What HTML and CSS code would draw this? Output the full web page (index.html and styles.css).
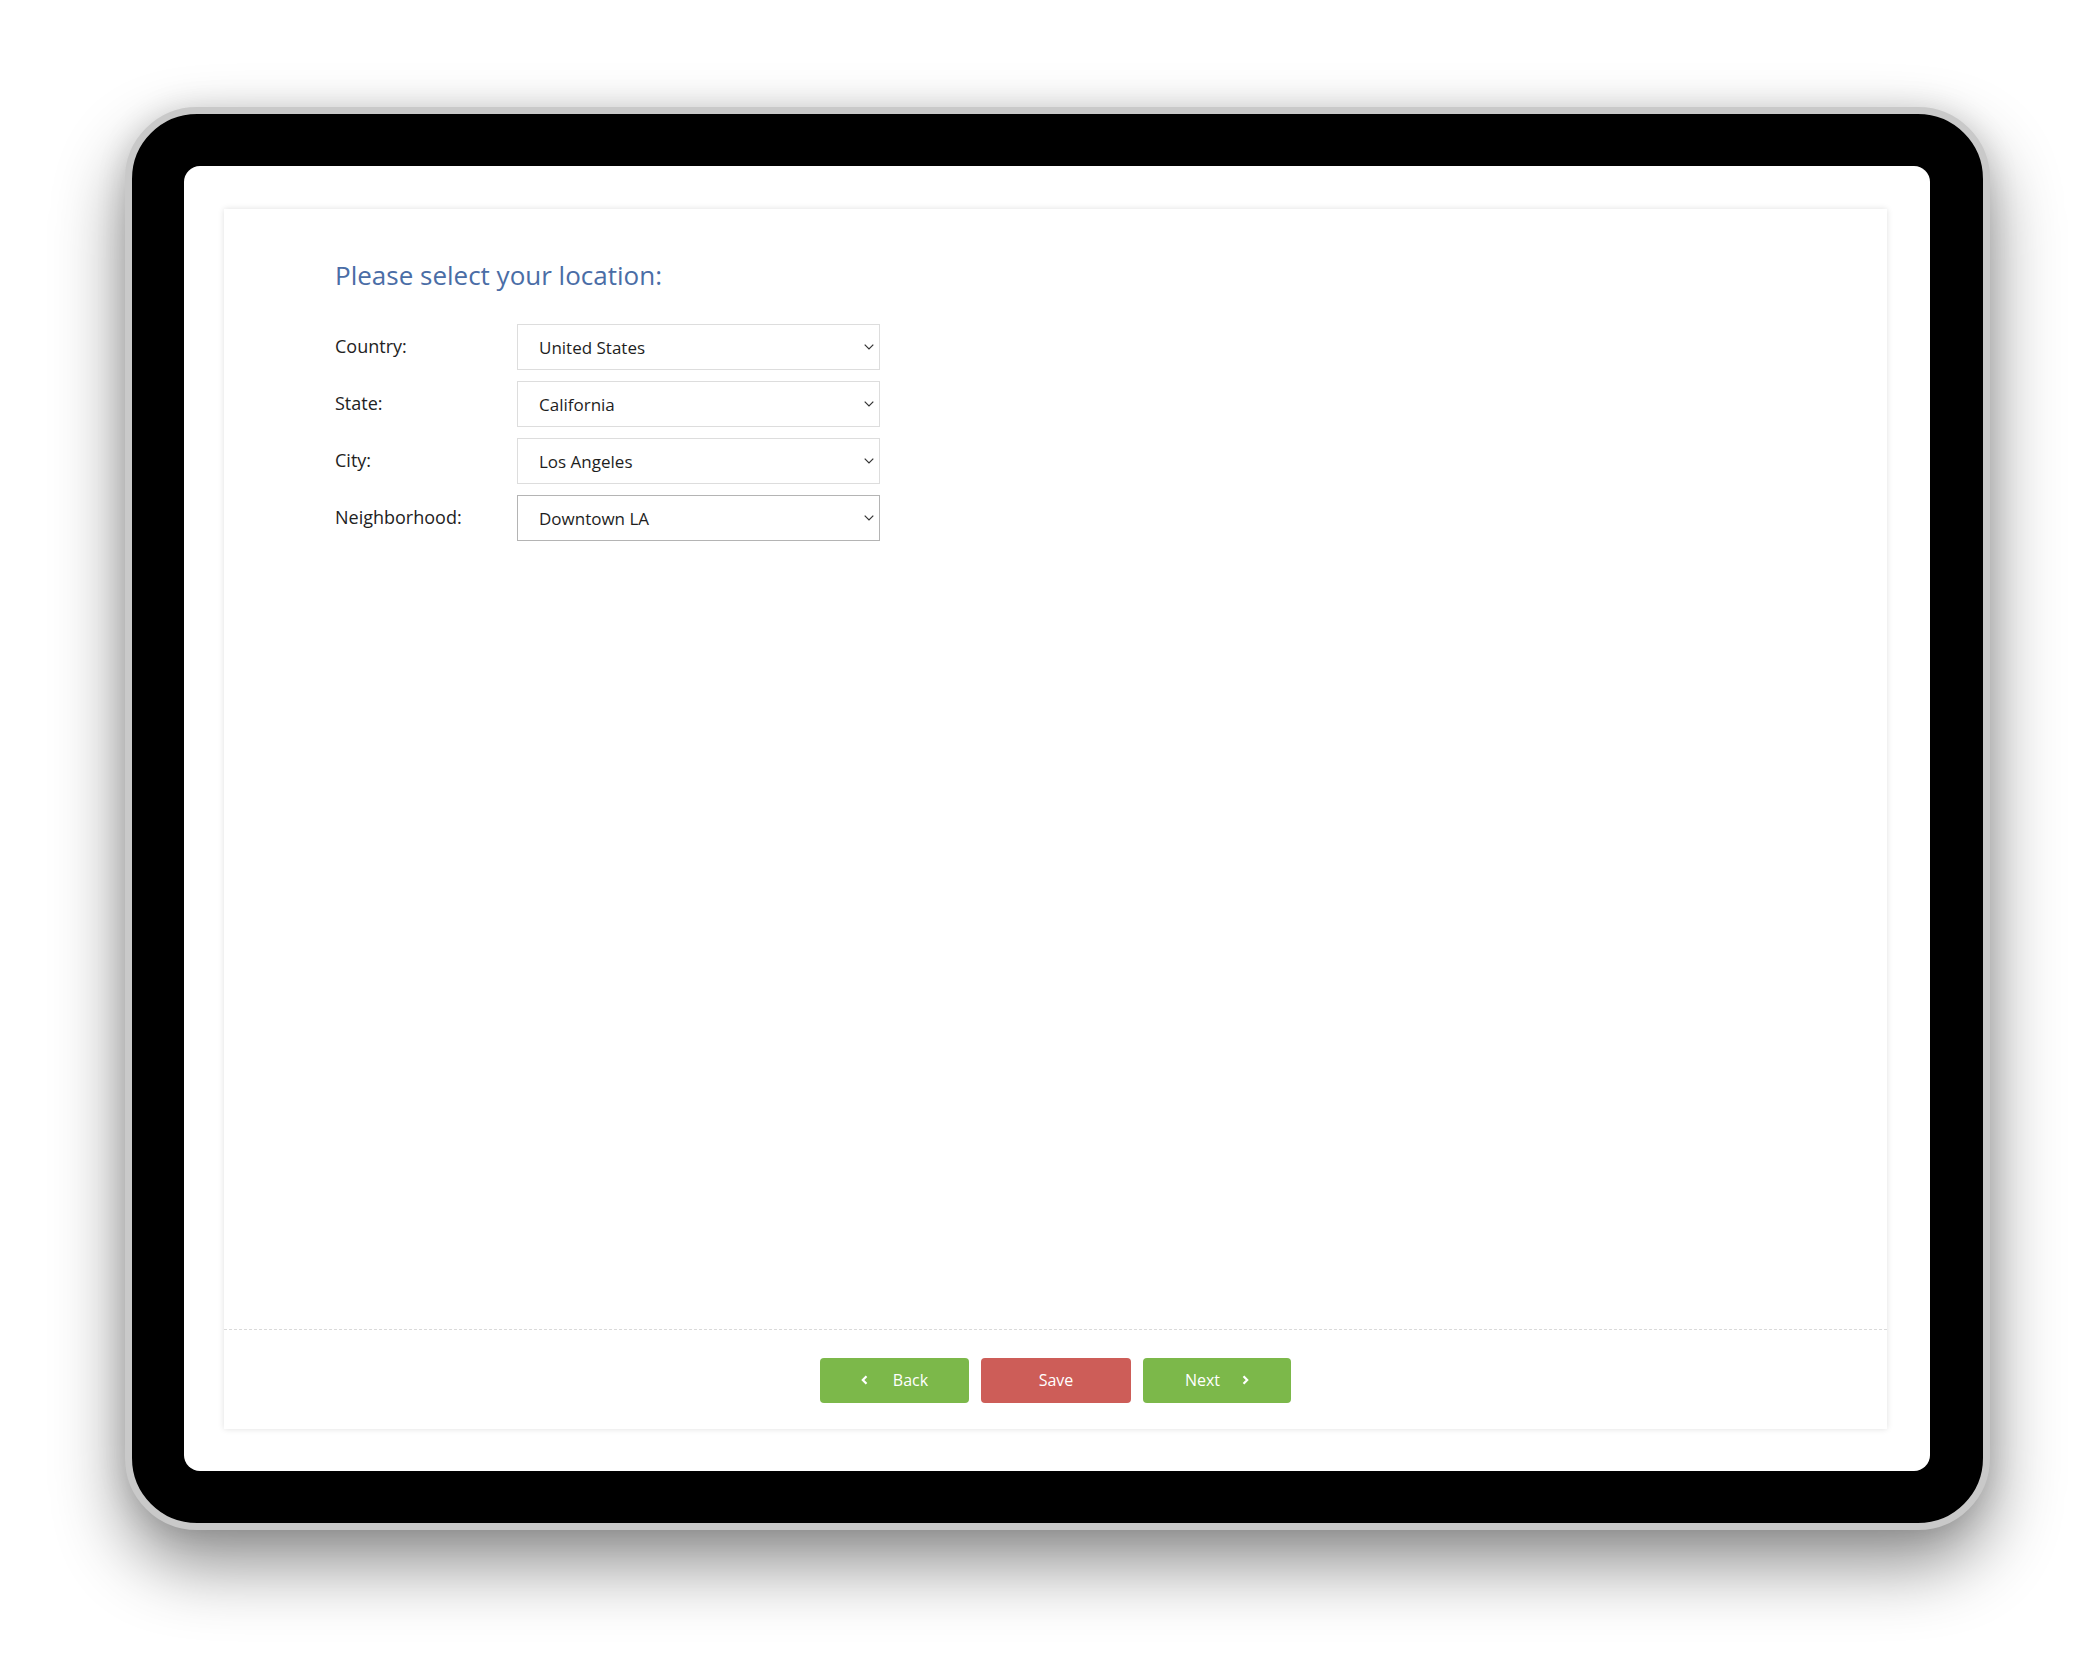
FILE: index.html
```html
<!DOCTYPE html>
<html lang="en">
<head>
<meta charset="utf-8">
<title>Select location</title>
<link rel="stylesheet" href="styles.css">
</head>
<body>
<div class="stage">
  <div class="device">
    <div class="screen">
      <div class="card">
        <div class="card-body">
          <h1 class="title">Please select your location:</h1>
          <div class="form">
            <div class="row">
              <label class="label" for="country">Country:</label>
              <div class="select-wrap">
                <select id="country" class="select"><option>United States</option></select>
                <svg class="chev" width="10" height="6" viewBox="0 0 10 6"><polyline points="0.7,0.7 5,5 9.3,0.7" fill="none" stroke="#333" stroke-width="1.2"/></svg>
              </div>
            </div>
            <div class="row">
              <label class="label" for="state">State:</label>
              <div class="select-wrap">
                <select id="state" class="select"><option>California</option></select>
                <svg class="chev" width="10" height="6" viewBox="0 0 10 6"><polyline points="0.7,0.7 5,5 9.3,0.7" fill="none" stroke="#333" stroke-width="1.2"/></svg>
              </div>
            </div>
            <div class="row">
              <label class="label" for="city">City:</label>
              <div class="select-wrap">
                <select id="city" class="select"><option>Los Angeles</option></select>
                <svg class="chev" width="10" height="6" viewBox="0 0 10 6"><polyline points="0.7,0.7 5,5 9.3,0.7" fill="none" stroke="#333" stroke-width="1.2"/></svg>
              </div>
            </div>
            <div class="row">
              <label class="label" for="hood">Neighborhood:</label>
              <div class="select-wrap">
                <select id="hood" class="select select-active"><option>Downtown LA</option></select>
                <svg class="chev" width="10" height="6" viewBox="0 0 10 6"><polyline points="0.7,0.7 5,5 9.3,0.7" fill="none" stroke="#333" stroke-width="1.2"/></svg>
              </div>
            </div>
          </div>
        </div>
        <div class="card-footer">
          <button class="btn btn-green btn-back" type="button">
            <svg class="bchev" width="7" height="10" viewBox="0 0 7 10"><polyline points="5.5,1.2 1.8,5 5.5,8.8" fill="none" stroke="#fff" stroke-width="2.2"/></svg>
            <span>Back</span>
          </button>
          <button class="btn btn-red" type="button"><span>Save</span></button>
          <button class="btn btn-green btn-next" type="button">
            <span>Next</span>
            <svg class="bchev" width="7" height="10" viewBox="0 0 7 10"><polyline points="1.5,1.2 5.2,5 1.5,8.8" fill="none" stroke="#fff" stroke-width="2.2"/></svg>
          </button>
        </div>
      </div>
    </div>
  </div>
</div>
</body>
</html>
```

FILE: styles.css
```css
* { box-sizing: border-box; }

html, body {
  margin: 0;
  padding: 0;
  background: #ffffff;
  font-family: "Open Sans", "Liberation Sans", sans-serif;
}

.stage {
  width: 2085px;
  height: 1668px;
  padding: 107px 0 0 125px;
  overflow: hidden;
}

.device {
  width: 1865px;
  height: 1423px;
  background: #000;
  border: 7px solid #c9c9c9;
  border-radius: 72px;
  padding: 52px 53px 52px 52px;
  box-shadow: 0 34px 70px rgba(0, 0, 0, 0.45), 0 0 30px rgba(0, 0, 0, 0.12);
}

.screen {
  width: 100%;
  height: 100%;
  background: #fff;
  border-radius: 16px;
  padding: 43px 43px 42px 40px;
  display: flex;
}

.card {
  flex: 1;
  display: flex;
  flex-direction: column;
  background: #fff;
  box-shadow: 0 0 6px rgba(0, 0, 0, 0.13);
}

.card-body {
  flex: 1;
  padding: 48px 0 0 111px;
}

.title {
  margin: 0;
  font-size: 26px;
  line-height: 36px;
  font-weight: 400;
  color: #4a6da6;
}

.form {
  margin-top: 31px;
  display: flex;
  flex-direction: column;
  gap: 11px;
}

.row {
  display: flex;
  align-items: center;
  height: 46px;
}

.label {
  width: 182px;
  font-size: 18px;
  color: #222;
  line-height: 24px;
  margin-top: -2px;
}

.select-wrap {
  position: relative;
  width: 363px;
  height: 46px;
}

.select {
  appearance: none;
  -webkit-appearance: none;
  width: 100%;
  height: 100%;
  margin: 0;
  border: 1px solid #dddddd;
  border-radius: 0;
  background: #fff;
  padding: 0 30px 0 21px;
  font-family: "Open Sans", "Liberation Sans", sans-serif;
  font-size: 17px;
  color: #1e1e1e;
  outline: none;
}

.select-active {
  border-color: #b4b4b4;
}

.chev {
  position: absolute;
  right: 6px;
  top: 20px;
  pointer-events: none;
}

.card-footer {
  height: 100px;
  border-top: 1px dashed #dadada;
  display: flex;
  justify-content: center;
  align-items: center;
  gap: 12px;
  padding-top: 1px;
}

.btn {
  height: 45px;
  border: none;
  border-radius: 4px;
  color: #fff;
  font-family: "Open Sans", "Liberation Sans", sans-serif;
  font-size: 16px;
  display: flex;
  align-items: center;
  justify-content: center;
  padding: 0;
  cursor: pointer;
}

.btn-green { background: #7cb84a; }
.btn-red { background: #cd5d58; width: 150px; }
.btn-back { width: 149px; gap: 25px; }
.btn-next { width: 148px; gap: 22px; }

.bchev { display: block; }
```
